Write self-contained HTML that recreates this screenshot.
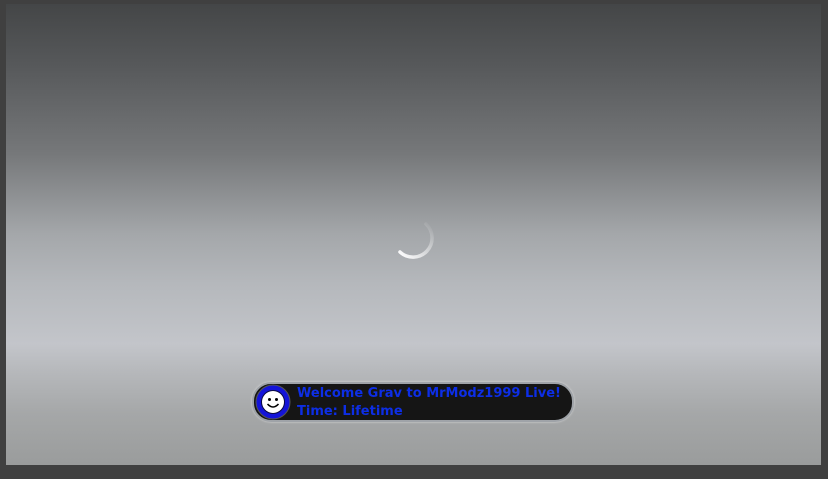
<!DOCTYPE html><html><head><style>
html,body{margin:0;padding:0;width:828px;height:479px;background:#404040;overflow:hidden}
.in{position:absolute;left:6px;top:4px;width:815px;height:461px;background:linear-gradient(#444647 0px,#56585a 60px,#76787a 150px,#a4a7aa 230px,#b5b8bc 280px,#c3c5ca 340px,#b5b7ba 370px,#a5a7a8 410px,#9a9c9c 461px)}
.pill{position:absolute;left:252px;top:382px;width:318px;height:36px;border-radius:19px;background:#151515;border:2px solid #9fa3a8;box-shadow:0 0 2px #ddd}
.t{position:absolute;left:43px;font:bold 13px "DejaVu Sans","Liberation Sans",sans-serif;color:#0d2ee6;white-space:nowrap}
</style></head><body><div class="in"></div>
<svg style="position:absolute;left:0;top:0" width="828" height="479">
<defs><linearGradient id="g" x1="1" y1="0" x2="0" y2="1"><stop offset="0" stop-color="#fff" stop-opacity="0"/><stop offset="1" stop-color="#fff"/></linearGradient></defs>
<path d="M426 224 A17 17 0 0 1 400 252" fill="none" stroke="url(#g)" stroke-width="3.5" stroke-linecap="round"/>
</svg>
<div class="pill">
<svg style="position:absolute;left:1px;top:0" width="36" height="36"><circle cx="18" cy="18" r="17" fill="#1414d8" stroke="#555" stroke-width="1"/><circle cx="18" cy="18" r="12" fill="#0a0a40"/><circle cx="18" cy="18" r="11" fill="#fff"/><circle cx="14.5" cy="15.5" r="1.5" fill="#000"/><circle cx="21.5" cy="15.5" r="1.5" fill="#000"/><path d="M12.5 20 Q18 26 23.5 20" fill="none" stroke="#000" stroke-width="1.6"/></svg>
<div class="t" style="top:2px">Welcome Grav to MrModz1999 Live!</div>
<div class="t" style="top:20px">Time: Lifetime</div>
</div>
</body></html>
